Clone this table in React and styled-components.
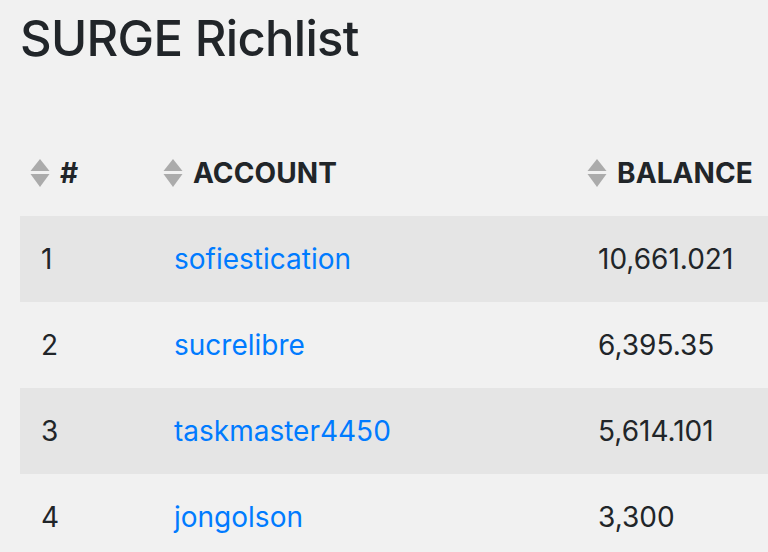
import React from "react";
import styled, { createGlobalStyle } from "styled-components";

const rows = [
  { rank: 1, account: "sofiestication", balance: "10,661.021" },
  { rank: 2, account: "sucrelibre", balance: "6,395.35" },
  { rank: 3, account: "taskmaster4450", balance: "5,614.101" },
  { rank: 4, account: "jongolson", balance: "3,300" },
];

const GlobalStyle = createGlobalStyle`
  html, body {
    margin: 0;
    padding: 0;
    background: #f1f1f1;
    overflow: hidden;
  }
  body {
    font-family: Inter, "Noto Sans", sans-serif;
    color: #212529;
  }
`;

const SortIcon = () => (
  <SortSvg width="20" height="28" viewBox="0 0 20 28">
    <path d="M10 0 L19.5 12 L0.5 12 Z" fill="#ababab" />
    <path d="M0.5 15 L19.5 15 L10 28 Z" fill="#ababab" />
  </SortSvg>
);

const App = () => {
  return (
    <>
      <GlobalStyle />
      <Page>
        <Title>SURGE Richlist</Title>
        <Table>
          <colgroup>
            <col style={{ width: 133 }} />
            <col style={{ width: 424 }} />
            <col style={{ width: 191 }} />
          </colgroup>
          <thead>
            <tr>
              <HeadCell>
                <HeadInner>
                  <SortIcon />
                  #
                </HeadInner>
              </HeadCell>
              <HeadCell>
                <HeadInner>
                  <SortIcon />
                  Account
                </HeadInner>
              </HeadCell>
              <HeadCell>
                <HeadInner>
                  <SortIcon />
                  Balance
                </HeadInner>
              </HeadCell>
            </tr>
          </thead>
          <tbody>
            {rows.map((r, i) => (
              <Row key={r.rank} $striped={i % 2 === 0}>
                <Cell>{r.rank}</Cell>
                <Cell>
                  <AccountLink href="#">{r.account}</AccountLink>
                </Cell>
                <Cell>{r.balance}</Cell>
              </Row>
            ))}
          </tbody>
        </Table>
      </Page>
    </>
  );
};

export default App;

const Page = styled.div`
  padding: 0 0 0 20px;
  width: 748px;
`;

const Title = styled.h1`
  margin: 9px 0 0;
  font-size: 49px;
  line-height: 60px;
  font-weight: 500;
  letter-spacing: -0.7px;
  height: 121px;
`;

const Table = styled.table`
  border-collapse: collapse;
  table-layout: fixed;
  width: 748px;
`;

const HeadCell = styled.th`
  height: 86px;
  padding: 0 0 0 10px;
  text-align: left;
  vertical-align: middle;
  font-size: 28px;
  font-weight: 700;
  text-transform: uppercase;
  letter-spacing: 0.1px;
  white-space: nowrap;
`;

const HeadInner = styled.div`
  display: flex;
  align-items: center;
  gap: 10px;
`;

const SortSvg = styled.svg`
  flex-shrink: 0;
`;

const Row = styled.tr`
  background: ${(p) => (p.$striped ? "#e5e5e5" : "transparent")};
`;

const Cell = styled.td`
  height: 86px;
  padding: 0 21px;
  vertical-align: middle;
  font-size: 28px;
  white-space: nowrap;
`;

const AccountLink = styled.a`
  color: #007bff;
  text-decoration: none;
`;
